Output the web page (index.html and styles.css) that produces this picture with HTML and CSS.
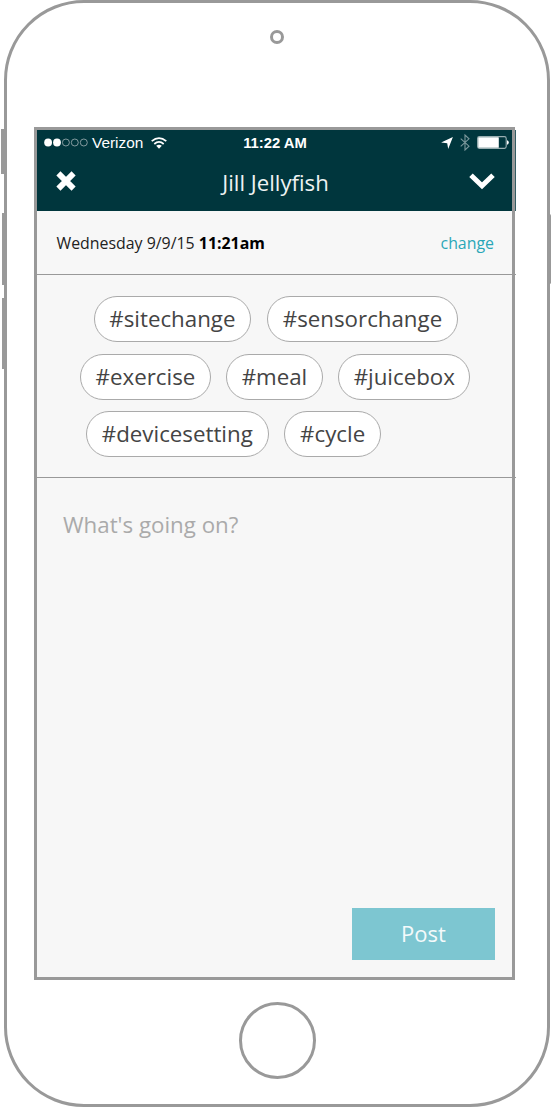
FILE: index.html
```html
<!DOCTYPE html>
<html lang="en">
<head>
<meta charset="utf-8">
<title>Jill Jellyfish</title>
<link rel="stylesheet" href="styles.css">
</head>
<body>
<div class="device">
  <span class="side-button mute"></span>
  <span class="side-button volume-up"></span>
  <span class="side-button volume-down"></span>
  <span class="side-button power"></span>
  <div class="camera"></div>
  <main class="screen">
    <header class="header">
      <div class="status">
        <div class="carrier">
          <svg class="signal" width="44" height="10" viewBox="0 0 44 10"><g fill="#fff"><circle cx="4.1" cy="4.5" r="3.9"/><circle cx="13" cy="4.5" r="3.9"/></g><g fill="none" stroke="#a3b3b6" stroke-width=".8"><circle cx="21.9" cy="4.5" r="3.5"/><circle cx="30.8" cy="4.5" r="3.5"/><circle cx="39.8" cy="4.5" r="3.5"/></g></svg>
          <span class="carrier-name">Verizon</span>
          <svg class="wifi" width="16" height="12" viewBox="0 0 16 12"><g fill="none" stroke="#fff" stroke-width="1.7"><path d="M.7 4.2Q8-2.1 15.3 4.2"/><path d="M3.3 7Q8 2.8 12.7 7"/></g><path d="M5.2 8.8Q8 6.5 10.8 8.8L8 11.7Z" fill="#fff"/></svg>
        </div>
        <span class="clock">11:22 AM</span>
        <div class="indicators">
          <svg width="12" height="12" viewBox="0 0 12 12"><path d="M11.9 0 7.2 11.9 6.2 6.3.1 5.6Z" fill="#fff"/></svg>
          <svg width="10" height="17" viewBox="0 0 10 17"><path d="M.7 4.6 9 12.2 5 16V1L9 4.8.7 12.4" fill="none" stroke="#7c989c" stroke-width="1.1"/></svg>
          <svg width="32" height="13" viewBox="0 0 32 13"><rect x=".6" y=".6" width="28.6" height="11.8" rx="1.8" fill="none" stroke="#9aafb2" stroke-width="1.1"/><rect x="1.2" y="1.2" width="20.6" height="10.6" rx=".6" fill="#fff"/><path d="M30 4.2Q31.8 4.7 31.8 6.5T30 8.8Z" fill="#fff"/></svg>
        </div>
      </div>
      <div class="nav">
        <svg width="20" height="20" viewBox="0 0 20 20"><path d="M2.4 2.4 17.6 17.6M17.6 2.4 2.4 17.6" stroke="#fff" stroke-width="5.8"/></svg>
        <h1 class="title">Jill Jellyfish</h1>
        <svg width="26" height="17" viewBox="0 0 26 17"><path d="M2 2.2 13 12.8 24 2.2" fill="none" stroke="#fff" stroke-width="5"/></svg>
      </div>
    </header>
    <section class="date-row">
      <span>Wednesday 9/9/15 <b>11:21am</b></span>
      <a class="change">change</a>
    </section>
    <section class="tags">
      <div class="tag-row row-one"><span class="tag">#sitechange</span><span class="tag">#sensorchange</span></div>
      <div class="tag-row row-two"><span class="tag">#exercise</span><span class="tag">#meal</span><span class="tag">#juicebox</span></div>
      <div class="tag-row row-three"><span class="tag">#devicesetting</span><span class="tag">#cycle</span></div>
    </section>
    <section class="composer">
      <p class="placeholder">What's going on?</p>
      <button class="post">Post</button>
    </section>
  </main>
  <div class="home"></div>
</div>
</body>
</html>
```
FILE: styles.css
```css
* { box-sizing: border-box; }
body { margin: 0; background: #fff; font-family: "Open Sans", sans-serif; }
svg { display: block; flex: none; }
.device {
  position: relative;
  width: 546px;
  height: 1107px;
  margin-left: 4px;
  border: 3px solid #999;
  border-radius: 80px;
  display: flex;
  flex-direction: column;
  align-items: center;
}
.side-button { position: absolute; background: #999; width: 3px; }
.mute { left: -6px; top: 126px; height: 45px; }
.volume-up { left: -5px; top: 210px; height: 72px; }
.volume-down { left: -5px; top: 295px; height: 71px; }
.power { right: -4px; top: 211px; height: 70px; border-radius: 2px; }
.camera { width: 14px; height: 14px; margin-top: 27px; border: 3px solid #999; border-radius: 50%; flex: none; }
.screen {
  width: 481px;
  height: 853px;
  margin: 83px 5px 0 0;
  border: 3px solid #999;
  background: #f7f7f7;
  display: flex;
  flex-direction: column;
  flex: none;
}
.header { position: relative; height: 81px; background: #00363d; color: #fff; flex: none; }
.header::after { content: ""; position: absolute; left: 478px; top: 0; width: 1px; height: 81px; background: #335d63; }
.status { display: grid; grid-template-columns: 1fr auto 1fr; height: 25px; align-items: center; padding: 0 3px 0 7px; }
.carrier, .indicators { display: flex; align-items: center; }
.carrier-name { font: 15.4px "Liberation Sans", sans-serif; margin: 0 8px 0 4px; }
.clock { font: bold 14.8px "Liberation Sans", sans-serif; margin-right: 3px; }
.indicators { justify-content: flex-end; gap: 7px; }
.nav { display: flex; justify-content: space-between; align-items: center; height: 56px; padding: 0 17px 4px 19px; }
.title { margin: 3px 0 0 6px; font-size: 22.2px; font-weight: 400; color: #eef2f2; }
.date-row { height: 64px; border-bottom: 1px solid #999; padding: 0 18px 0 19.5px; display: flex; align-items: center; justify-content: space-between; font-size: 15.9px; color: #222; flex: none; }
.date-row b { color: #000; }
.change { color: #2aa7b7; }
.tags { height: 203px; border-bottom: 1px solid #999; padding-top: 21px; display: flex; flex-direction: column; gap: 11.5px; flex: none; }
.date-row, .tags { position: relative; }
.date-row::after, .tags::after { content: ""; position: absolute; left: 478px; bottom: -1px; width: 1px; height: 1px; background: #999; }
.tag-row { display: flex; gap: 15.7px; }
.row-one { padding-left: 56.5px; }
.row-two { padding-left: 43px; gap: 15.2px; }
.row-three { padding-left: 49px; }
.tag { height: 46px; padding: 0 14.8px; border: 1px solid #aaa; border-radius: 23px; background: #fff; color: #444; font-size: 22.3px; line-height: 44px; white-space: nowrap; }
.row-two .tag { padding: 0 14.6px; }
.composer { flex: 1; display: flex; flex-direction: column; justify-content: space-between; padding: 32px 17px 17px 26px; }
.placeholder { margin: 0; font-size: 22.3px; line-height: 30px; color: #aaa; }
.post { align-self: flex-end; width: 143px; height: 52px; border: 0; padding: 0 0 2px; background: #7dc6d1; color: #f4fafb; font: 400 22px "Open Sans", sans-serif; }
.home { width: 77px; height: 77px; margin-top: 22px; border: 3px solid #999; border-radius: 50%; flex: none; }
```
